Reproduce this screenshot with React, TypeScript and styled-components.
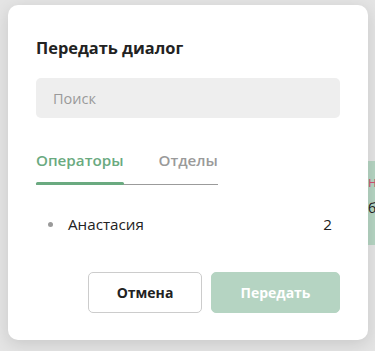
import React from "react";
import styled, { createGlobalStyle } from "styled-components";

const Global = createGlobalStyle`
  html, body { margin: 0; padding: 0; }
  body {
    background: #e4e4e4;
    font-family: "Open Sans", "Noto Sans", sans-serif;
    overflow: hidden;
  }
`;

const Stage = styled.div`
  position: relative;
  width: 375px;
  height: 351px;
  background: #e4e4e4;
  overflow: hidden;
`;

const Bubble = styled.div`
  position: absolute;
  left: 360px;
  top: 161px;
  width: 15px;
  height: 84px;
  background: #b5d4c2;
  padding: 8px 0 0 8px;
  box-sizing: border-box;
  font-size: 14px;
  line-height: 26px;
  color: #222;
  overflow: hidden;
  white-space: nowrap;
`;

const Red = styled.div`
  color: #d05070;
`;

const Modal = styled.div`
  position: absolute;
  left: 8px;
  top: 5px;
  width: 360px;
  height: 335px;
  box-sizing: border-box;
  background: #fff;
  border-radius: 10px;
  box-shadow: 0 4px 16px rgba(0, 0, 0, 0.12);
  padding: 32px 28px 27px;
  display: flex;
  flex-direction: column;
`;

const Title = styled.h2`
  margin: 0;
  font-size: 16.4px;
  font-weight: 700;
  line-height: 22px;
  color: #222;
`;

const Search = styled.input`
  margin-top: 19px;
  height: 40px;
  box-sizing: border-box;
  border: none;
  border-radius: 5px;
  background: #eeeeee;
  padding: 0 17px;
  font-family: inherit;
  font-size: 14.5px;
  color: #222;
  outline: none;
  &::placeholder { color: #9a9a9a; }
`;

const Tabs = styled.div`
  margin-top: 22px;
  display: flex;
  align-self: flex-start;
  gap: 35px;
  border-bottom: 1px solid #9b9b9b;
`;

const Tab = styled.div<{ $active?: boolean }>`
  position: relative;
  padding: 10px 0 14px;
  font-size: 15.2px;
  font-weight: 600;
  line-height: 20px;
  color: ${(p) => (p.$active ? "#6aaa80" : "#9a9a9a")};
  &::after {
    content: "";
    display: ${(p) => (p.$active ? "block" : "none")};
    position: absolute;
    left: 0;
    right: -1px;
    bottom: -1px;
    height: 3px;
    border-radius: 2px;
    background: #6aaa80;
  }
`;

const List = styled.ul`
  list-style: none;
  margin: 22px 0 0;
  padding: 0;
`;

const Item = styled.li`
  display: flex;
  align-items: center;
  height: 34px;
  padding: 0 8px 0 12px;
  font-size: 15.2px;
  color: #222;
`;

const Dot = styled.span`
  width: 5px;
  height: 5px;
  border-radius: 50%;
  background: #9a9a9a;
  margin-right: 15px;
`;

const Name = styled.span`
  flex: 1;
`;

const Footer = styled.div`
  margin-top: auto;
  display: flex;
  justify-content: flex-end;
  gap: 9px;
`;

const Button = styled.button<{ $primary?: boolean }>`
  height: 41px;
  box-sizing: border-box;
  border-radius: 5px;
  font-family: inherit;
  font-size: 14px;
  font-weight: 700;
  cursor: pointer;
  border: 1px solid ${(p) => (p.$primary ? "#b5d4c2" : "#cccccc")};
  background: ${(p) => (p.$primary ? "#b5d4c2" : "#ffffff")};
  color: ${(p) => (p.$primary ? "#ffffff" : "#222222")};
  width: ${(p) => (p.$primary ? "129px" : "114px")};
`;

export default function App() {
  return (
    <Stage>
      <Global />
      <Bubble>
        <Red>н</Red>
        <div>бо</div>
      </Bubble>
      <Modal>
        <Title>Передать диалог</Title>
        <Search placeholder="Поиск" />
        <Tabs>
          <Tab $active>Операторы</Tab>
          <Tab>Отделы</Tab>
        </Tabs>
        <List>
          <Item>
            <Dot />
            <Name>Анастасия</Name>
            <span>2</span>
          </Item>
        </List>
        <Footer>
          <Button>Отмена</Button>
          <Button $primary>Передать</Button>
        </Footer>
      </Modal>
    </Stage>
  );
}
